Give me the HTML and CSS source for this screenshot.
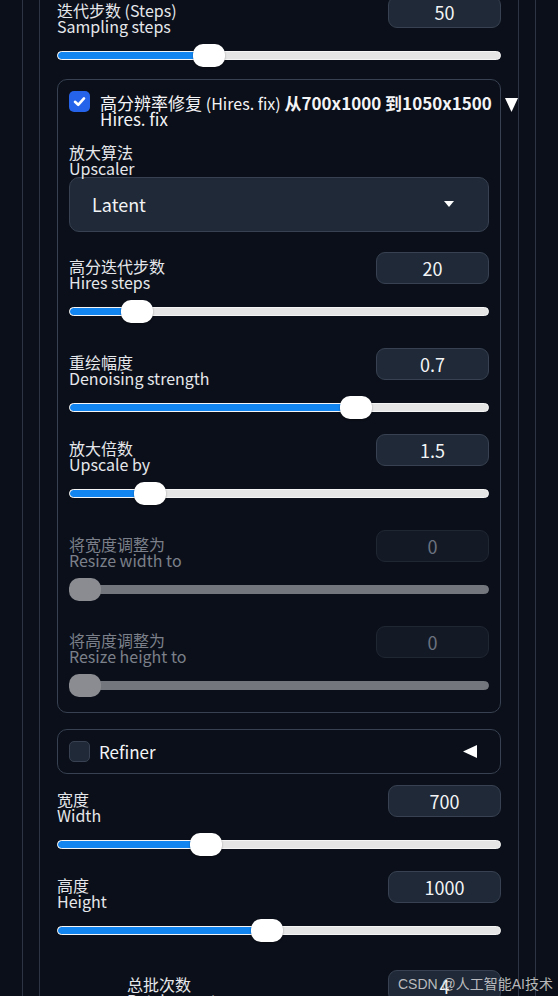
FILE: index.html
```html
<!DOCTYPE html>
<html lang="zh">
<head>
<meta charset="utf-8">
<title>Hires. fix</title>
<link rel="stylesheet" href="styles.css">
</head>
<body>
<div class="frame1">
 <div class="frame2">
  <div class="content">

   <div class="field">
    <div class="field-head">
     <div class="label"><span class="zh">迭代步数 (Steps)</span><span class="en">Sampling steps</span></div>
     <div class="num">50</div>
    </div>
    <div class="slider"><div class="track"><div class="fill" style="width:calc(0.329 * (100% - 32px) + 16px)"></div></div><div class="thumb" style="left:calc(0.329 * (100% - 32px))"></div></div>
   </div>

   <div class="group hires">
    <div class="group-title">
     <span class="check on"><svg viewBox="0 0 21 21" width="21" height="21"><path d="M6 10.8 L9.2 13.8 L15 7.4" fill="none" stroke="#fff" stroke-width="2.6" stroke-linecap="round" stroke-linejoin="round"/></svg></span>
     <div class="title-text">
      <div class="t1">高分辨率修复 <span class="paren">(Hires. fix)</span> <b>从700x1000 到1050x1500</b></div>
      <div class="t2">Hires. fix</div>
     </div>
     <svg class="tri-down" viewBox="0 0 13 14" width="13" height="14"><polygon points="0,0 13,0 6.5,14" fill="#fff"/></svg>
    </div>

    <div class="label dd-label"><span class="zh">放大算法</span><span class="en">Upscaler</span></div>
    <div class="dropdown">
     <span>Latent</span>
     <svg class="caret" viewBox="0 0 10 6" width="10" height="6"><polygon points="0,0 10,0 5,6" fill="#fff"/></svg>
    </div>

    <div class="field f-first">
     <div class="field-head">
      <div class="label"><span class="zh">高分迭代步数</span><span class="en">Hires steps</span></div>
      <div class="num">20</div>
     </div>
     <div class="slider"><div class="track"><div class="fill" style="width:calc(0.134 * (100% - 32px) + 16px)"></div></div><div class="thumb" style="left:calc(0.134 * (100% - 32px))"></div></div>
    </div>

    <div class="field">
     <div class="field-head">
      <div class="label"><span class="zh">重绘幅度</span><span class="en">Denoising strength</span></div>
      <div class="num">0.7</div>
     </div>
     <div class="slider"><div class="track"><div class="fill" style="width:calc(0.698 * (100% - 32px) + 16px)"></div></div><div class="thumb" style="left:calc(0.698 * (100% - 32px))"></div></div>
    </div>

    <div class="field tight">
     <div class="field-head">
      <div class="label"><span class="zh">放大倍数</span><span class="en">Upscale by</span></div>
      <div class="num">1.5</div>
     </div>
     <div class="slider"><div class="track"><div class="fill" style="width:calc(0.167 * (100% - 32px) + 16px)"></div></div><div class="thumb" style="left:calc(0.167 * (100% - 32px))"></div></div>
    </div>

    <div class="field disabled">
     <div class="field-head">
      <div class="label"><span class="zh">将宽度调整为</span><span class="en">Resize width to</span></div>
      <div class="num">0</div>
     </div>
     <div class="slider"><div class="track"></div><div class="thumb" style="left:0"></div></div>
    </div>

    <div class="field disabled">
     <div class="field-head">
      <div class="label"><span class="zh">将高度调整为</span><span class="en">Resize height to</span></div>
      <div class="num">0</div>
     </div>
     <div class="slider"><div class="track"></div><div class="thumb" style="left:0"></div></div>
    </div>
   </div>

   <div class="group refiner">
    <span class="check"></span>
    <span class="refiner-text">Refiner</span>
    <svg class="tri-left" viewBox="0 0 14 13" width="14" height="13"><polygon points="14,0 14,13 0,6.5" fill="#fff"/></svg>
   </div>

   <div class="field f-width">
    <div class="field-head">
     <div class="label"><span class="zh">宽度</span><span class="en">Width</span></div>
     <div class="num">700</div>
    </div>
    <div class="slider"><div class="track"><div class="fill" style="width:calc(0.323 * (100% - 32px) + 16px)"></div></div><div class="thumb" style="left:calc(0.323 * (100% - 32px))"></div></div>
   </div>

   <div class="field tight">
    <div class="field-head">
     <div class="label"><span class="zh">高度</span><span class="en">Height</span></div>
     <div class="num">1000</div>
    </div>
    <div class="slider"><div class="track"><div class="fill" style="width:calc(0.471 * (100% - 32px) + 16px)"></div></div><div class="thumb" style="left:calc(0.471 * (100% - 32px))"></div></div>
   </div>

   <div class="field batch">
    <div class="field-head">
     <div class="label"><span class="zh">总批次数</span><span class="en">Batch count</span></div>
     <div class="num">4</div>
    </div>
   </div>

  </div>
 </div>
</div>
<div class="watermark">CSDN @人工智能AI技术</div>
</body>
</html>
```

FILE: styles.css
```css
html, body {
  margin: 0;
  padding: 0;
  background: #0b0f19;
  height: 996px;
  overflow: hidden;
}
body {
  font-family: "Noto Sans CJK SC", "Noto Sans", sans-serif;
  color: #e5e7eb;
  position: relative;
}
.frame1 {
  margin: 0 22px;
  border-left: 1px solid #2d3443;
  border-right: 1px solid #2d3443;
  padding: 0 16px;
  height: 1100px;
}
.frame2 {
  border-left: 1px solid #2d3443;
  border-right: 1px solid #2d3443;
  padding: 0 17px;
  height: 1100px;
}
.content {
  margin-top: -4px;
  display: flex;
  flex-direction: column;
}

/* fields */
.field { margin-top: 25px; }
.content > .field:first-child { margin-top: 0; }
.field.tight { margin-top: 15px; }
.field.f-first { margin-top: 20px; }
.field.f-width { margin-top: 11px; }
.field.batch { margin-top: 28px; }
.field-head {
  display: flex;
  justify-content: space-between;
  align-items: flex-start;
}
.label {
  display: flex;
  flex-direction: column;
  padding-top: 6px;
  font-size: 16px;
  line-height: 16px;
  color: #e5e7eb;
}
.label .zh, .label .en { white-space: nowrap; }
.num {
  width: 113px;
  height: 32px;
  box-sizing: border-box;
  border: 1px solid #374151;
  border-radius: 9px;
  background: #1f2937;
  color: #f3f4f6;
  font-size: 18px;
  line-height: 30px;
  text-align: center;
}
.slider {
  position: relative;
  height: 23px;
  margin-top: 10px;
}
.track {
  position: absolute;
  left: 0;
  right: 0;
  top: 7px;
  height: 9px;
  box-sizing: border-box;
  border-radius: 5px;
  background: #e5e5e5;
  border: 1px solid #f5f5f5;
  overflow: hidden;
}
.fill {
  height: 100%;
  background: #1385f0;
  border-radius: 4px 0 0 4px;
}
.thumb {
  position: absolute;
  top: 0;
  width: 32px;
  height: 23px;
  border-radius: 10px;
  background: #ffffff;
  box-shadow: 0 1px 2px rgba(0,0,0,0.35);
}

/* disabled */
.disabled .label { color: #7b808a; }
.disabled .num {
  background: #141a25;
  border-color: #1f2733;
  color: #6b7280;
}
.disabled .track {
  background: #74767d;
  border-color: #74767d;
}
.disabled .thumb {
  background: #8b8c92;
  box-shadow: none;
}

/* groups */
.group {
  border: 1px solid #374151;
  border-radius: 10px;
}
.hires {
  position: relative;
  margin-top: 12px;
  padding: 11px 11px 15px 11px;
}
.group-title {
  display: flex;
  align-items: flex-start;
}
.check {
  width: 21px;
  height: 21px;
  box-sizing: border-box;
  border-radius: 5px;
  background: #1f2937;
  border: 1px solid #374151;
  flex-shrink: 0;
  display: block;
}
.check svg { display: block; }
.check.on {
  background: #2563eb;
  border: none;
}
.title-text {
  margin-left: 10px;
  margin-top: 4px;
  font-size: 17px;
  line-height: 16px;
  color: #f3f4f6;
  white-space: nowrap;
}
.title-text .paren { font-size: 16px; }
.title-text b { font-weight: 600; }
.tri-down {
  position: absolute;
  right: -18px;
  top: 18px;
}
.dd-label { margin-top: 17px; padding-top: 0; }
.dropdown {
  margin-top: 1px;
  height: 55px;
  box-sizing: border-box;
  border: 1px solid #374151;
  border-radius: 10px;
  background: #1f2937;
  display: flex;
  align-items: center;
  padding: 0 34px 2px 22px;
  font-size: 18px;
  color: #f3f4f6;
}
.dropdown .caret { margin-left: auto; }

.refiner {
  margin-top: 16px;
  padding: 11px;
  display: flex;
  align-items: center;
}
.refiner-text {
  margin-left: 9px;
  font-size: 17px;
  line-height: 21px;
  color: #f3f4f6;
}
.tri-left { margin-left: auto; margin-right: 12px; }

.batch .label { margin-left: 70px; }

.watermark {
  position: absolute;
  right: 5px;
  top: 975px;
  font-family: "Liberation Sans", "Noto Sans CJK SC", sans-serif;
  font-size: 14px;
  line-height: 18px;
  color: rgba(215, 215, 215, 0.85);
  white-space: nowrap;
}
```
